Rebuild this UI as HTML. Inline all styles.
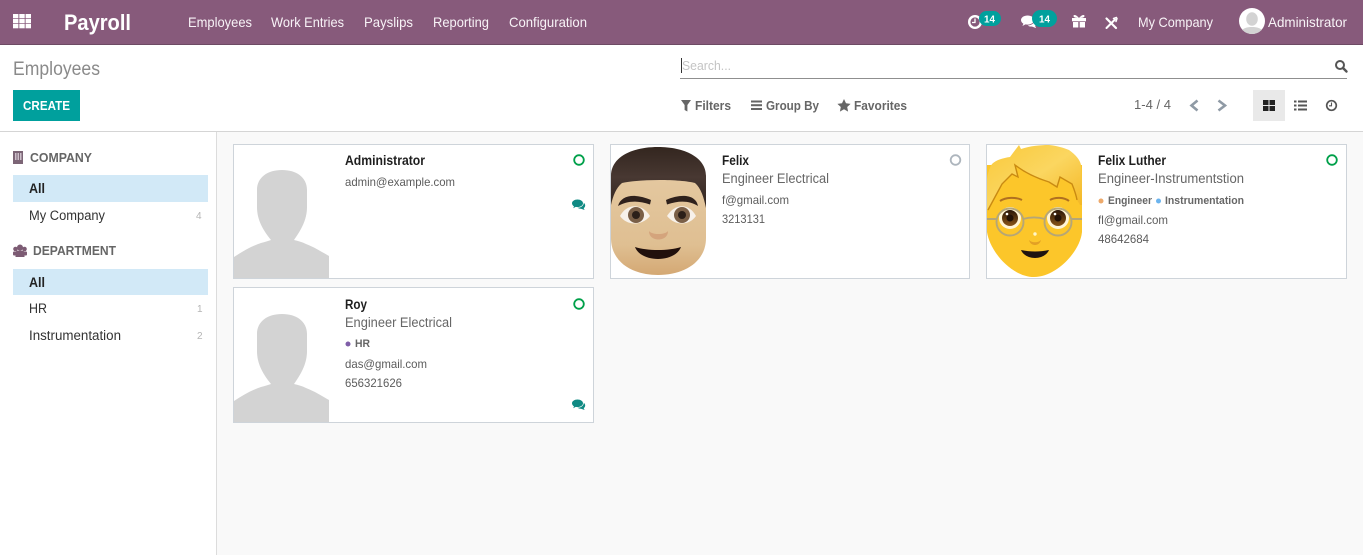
<!DOCTYPE html>
<html lang="en"><head><meta charset="utf-8"><title>Employees - Payroll</title>
<style>
html,body{margin:0;padding:0;width:1363px;height:555px;overflow:hidden;background:#f9f9f9}
svg{display:block}
text{font-family:"Liberation Sans",sans-serif;white-space:pre}
.nav{font-size:13.6px;fill:#f8f3f7}
.b{font-weight:bold}
.h{font-size:12.5px;font-weight:bold;fill:#666}
.side{font-size:13.5px;fill:#333}
.n{font-size:10px;fill:#b5b5b5}
.name{font-size:13.4px;font-weight:bold;fill:#1f1f1f}
.job{font-size:13.5px;fill:#666}
.sm{font-size:12px;fill:#5c5c5c}
.tag{font-size:11.4px;font-weight:bold;fill:#666}
.tb{font-size:13px;font-weight:bold;fill:#666}
</style></head><body>
<svg width="1363" height="555" viewBox="0 0 1363 555" xmlns="http://www.w3.org/2000/svg">
<defs>
<path id="sil" fill="#d3d3d3" d="M0 113C9 107 18 102 27 99C31 98 34 97 37 96C29 86 23 76 23 63L23 46C23 33 34 26 48 26C62 26 73 33 73 46L73 63C73 76 67 86 60 96C64 97 68 98 72 100C80 103 88 108 95 112V134H0Z"/>
<g id="chat"><path d="M5.500 0C2.500 0 0 1.600 0 3.800C0 5.100 .8 6.200 2 6.900L1.200 8.800L3.700 7.400C4.300 7.500 4.900 7.600 5.500 7.600C8.500 7.600 11 5.900 11 3.800C11 1.600 8.500 0 5.500 0Z"/><path d="M11.800 3.200C11.900 5.800 9.200 8.100 5.700 8.300C6.500 9 7.700 9.300 9 9.200L12.600 10.500L11.700 8.600C12.600 8 13.200 7.100 13.200 6C13.200 4.900 12.700 3.900 11.800 3.200Z"/></g>
<clipPath id="a1"><circle cx="1252" cy="21" r="13"/></clipPath>
<linearGradient id="skin" x1="0" y1="0" x2="0" y2="1"><stop offset="0" stop-color="#e4c8a0"/><stop offset=".7" stop-color="#dfbf92"/><stop offset="1" stop-color="#d4a873"/></linearGradient>
<linearGradient id="hair" x1="0" y1="0" x2="0" y2="1"><stop offset="0" stop-color="#33261f"/><stop offset=".5" stop-color="#483832"/><stop offset="1" stop-color="#31251f"/></linearGradient>
<linearGradient id="blond" x1="0" y1="0" x2="1" y2="1"><stop offset="0" stop-color="#f9c93a"/><stop offset=".5" stop-color="#fbd660"/><stop offset="1" stop-color="#f3b520"/></linearGradient>
<linearGradient id="iris" x1="0" y1="0" x2="0" y2="1"><stop offset="0" stop-color="#2a1608"/><stop offset="1" stop-color="#8a5518"/></linearGradient>
</defs>

<!-- navbar -->
<rect width="1363" height="44" fill="#875a7b"/><rect y="44" width="1363" height="1" fill="#6d4a64"/>
<g fill="#fff"><rect x="13" y="14" width="5.400" height="4.300"/><rect x="19.300" y="14" width="5.400" height="4.300"/><rect x="25.600" y="14" width="5.400" height="4.300"/><rect x="13" y="19" width="5.400" height="4.300"/><rect x="19.300" y="19" width="5.400" height="4.300"/><rect x="25.600" y="19" width="5.400" height="4.300"/><rect x="13" y="24" width="5.400" height="4.300"/><rect x="19.300" y="24" width="5.400" height="4.300"/><rect x="25.600" y="24" width="5.400" height="4.300"/></g>
<text x="64" y="30" font-size="22.500" font-weight="bold" fill="#fff" textLength="67" lengthAdjust="spacingAndGlyphs">Payroll</text>
<text class="nav" x="188" y="27" textLength="64" lengthAdjust="spacingAndGlyphs">Employees</text>
<text class="nav" x="271" y="27" textLength="73" lengthAdjust="spacingAndGlyphs">Work Entries</text>
<text class="nav" x="364" y="27" textLength="49" lengthAdjust="spacingAndGlyphs">Payslips</text>
<text class="nav" x="433" y="27" textLength="56" lengthAdjust="spacingAndGlyphs">Reporting</text>
<text class="nav" x="509" y="27" textLength="78" lengthAdjust="spacingAndGlyphs">Configuration</text>
<!-- activity -->
<circle cx="975" cy="22" r="5.800" fill="none" stroke="#fff" stroke-width="2.400"/><path d="M975 18.500V22.500H972" fill="none" stroke="#fff" stroke-width="1.300"/>
<rect x="979" y="11" width="22" height="15" rx="7.500" fill="#00a09d"/><text x="984" y="22.500" font-size="10.500" font-weight="bold" fill="#fff" textLength="11" lengthAdjust="spacingAndGlyphs">14</text>
<!-- messages -->
<g transform="translate(1021,15.500) scale(1.200)" fill="#fff"><use href="#chat"/></g>
<rect x="1032" y="10" width="25" height="17" rx="8.500" fill="#00a09d"/><text x="1039" y="22.500" font-size="10.500" font-weight="bold" fill="#fff" textLength="11" lengthAdjust="spacingAndGlyphs">14</text>
<!-- gift -->
<g fill="#fff"><rect x="1072" y="18" width="14" height="3.300"/><rect x="1073" y="22" width="5.300" height="5.500"/><rect x="1079.700" y="22" width="5.300" height="5.500"/><path d="M1079 18C1076 18 1073.500 17.500 1073.500 16C1073.500 14.500 1076 14.500 1079 18C1082 14.500 1084.500 14.500 1084.500 16C1084.500 17.500 1082 18 1079 18Z"/></g>
<!-- tools -->
<g stroke="#fff" fill="none" stroke-linecap="round"><path d="M1106.500 28L1115 19.500" stroke-width="2"/><path d="M1113.500 18.500L1116.500 17.500M1116 21.500L1117 18.500" stroke-width="1.500"/><path d="M1106.500 18.500L1116 28" stroke-width="2.200"/></g>
<text class="nav" x="1138" y="27" textLength="75" lengthAdjust="spacingAndGlyphs">My Company</text>
<circle cx="1252" cy="21" r="13" fill="#fff"/><g clip-path="url(#a1)"><ellipse cx="1252" cy="19" rx="5.800" ry="6.800" fill="#d3d3d3"/><path d="M1239 35C1241 28 1247 27 1252 27C1257 27 1263 28 1265 35Z" fill="#d3d3d3"/></g>
<text class="nav" x="1268" y="27" textLength="79" lengthAdjust="spacingAndGlyphs">Administrator</text>

<!-- control panel -->
<rect y="45" width="1363" height="86" fill="#fff"/><rect y="131" width="1363" height="1" fill="#d5d5d5"/>
<text x="13" y="75" font-size="19" fill="#8a8a8a" textLength="87" lengthAdjust="spacingAndGlyphs">Employees</text>
<rect x="13" y="90" width="67" height="31" fill="#00a09d"/>
<text x="23" y="110" font-size="12.500" font-weight="bold" fill="#fff" textLength="47" lengthAdjust="spacingAndGlyphs">CREATE</text>
<rect x="681" y="58" width="1" height="15" fill="#333"/>
<text x="682" y="70" font-size="13" fill="#c4c4c4" textLength="49" lengthAdjust="spacingAndGlyphs">Search...</text>
<rect x="680" y="78" width="667" height="1" fill="#8f8f8f"/>
<circle cx="1340" cy="65" r="4" fill="none" stroke="#555" stroke-width="2"/><path d="M1343 68L1346.500 71.500" stroke="#555" stroke-width="2.400" stroke-linecap="round"/>
<path d="M681 100H691L687.400 105V111.500L684.600 110V105Z" fill="#666"/>
<text class="tb" x="695" y="110" textLength="36" lengthAdjust="spacingAndGlyphs">Filters</text>
<g fill="#666"><rect x="751" y="100.500" width="11" height="2"/><rect x="751" y="104.200" width="11" height="2"/><rect x="751" y="108" width="11" height="2"/></g>
<text class="tb" x="766" y="110" textLength="53" lengthAdjust="spacingAndGlyphs">Group By</text>
<path d="M844 99L846 103.300L850.600 103.900L847.200 107L848.100 111.600L844 109.300L839.900 111.600L840.800 107L837.400 103.900L842 103.300Z" fill="#666"/>
<text class="tb" x="854" y="110" textLength="53" lengthAdjust="spacingAndGlyphs">Favorites</text>
<text x="1134" y="109" font-size="13" fill="#666" textLength="37" lengthAdjust="spacingAndGlyphs">1-4 / 4</text>
<path d="M1197.500 100.500L1191.500 105.500L1197.500 110.500" fill="none" stroke="#8f9aa5" stroke-width="2.600"/><path d="M1218.500 100.500L1225 105.500L1218.500 110.500" fill="none" stroke="#8f9aa5" stroke-width="2.600"/>
<rect x="1253" y="90" width="32" height="31" fill="#e9e9e9"/>
<g fill="#222"><rect x="1263" y="100" width="5.500" height="5"/><rect x="1269.500" y="100" width="5.500" height="5"/><rect x="1263" y="106" width="5.500" height="5"/><rect x="1269.500" y="106" width="5.500" height="5"/></g>
<g fill="#555"><rect x="1294" y="100.500" width="2.500" height="2"/><rect x="1298" y="100.500" width="9" height="2"/><rect x="1294" y="104.500" width="2.500" height="2"/><rect x="1298" y="104.500" width="9" height="2"/><rect x="1294" y="108.500" width="2.500" height="2"/><rect x="1298" y="108.500" width="9" height="2"/></g>
<circle cx="1331.500" cy="105.500" r="4.800" fill="none" stroke="#555" stroke-width="1.700"/><path d="M1331.500 102.500V105.800H1329" fill="none" stroke="#555" stroke-width="1.100"/>

<!-- sidebar -->
<rect y="132" width="216" height="423" fill="#fff"/><rect x="216" y="132" width="1" height="423" fill="#dcdcdc"/>
<rect x="13" y="151" width="10" height="13" fill="#7c6576"/><g fill="#cdbfca"><rect x="15" y="153" width="1.500" height="7"/><rect x="17.500" y="153" width="1.500" height="7"/><rect x="20" y="153" width="1.500" height="7"/></g>
<text class="h" x="30" y="162" textLength="62" lengthAdjust="spacingAndGlyphs">COMPANY</text>
<rect x="13" y="175" width="195" height="27" fill="#d2e9f7"/>
<text class="side b" x="29" y="193" style="fill:#222" textLength="16" lengthAdjust="spacingAndGlyphs">All</text>
<text class="side" x="29" y="220" textLength="76" lengthAdjust="spacingAndGlyphs">My Company</text>
<text class="n" x="196" y="219" textLength="6">4</text>
<g fill="#7c5b73"><circle cx="20" cy="247.500" r="3"/><circle cx="15.500" cy="249" r="2.300"/><circle cx="24.500" cy="249" r="2.300"/><path d="M15.500 257V252.500C15.500 251 17 250.500 20 250.500C23 250.500 24.500 251 24.500 252.500V257Z"/><rect x="13" y="251.500" width="3" height="4" rx="1"/><rect x="24" y="251.500" width="3" height="4" rx="1"/></g>
<text class="h" x="33" y="255" textLength="83" lengthAdjust="spacingAndGlyphs">DEPARTMENT</text>
<rect x="13" y="269" width="195" height="26" fill="#d2e9f7"/>
<text class="side b" x="29" y="287" style="fill:#222" textLength="16" lengthAdjust="spacingAndGlyphs">All</text>
<text class="side" x="29" y="313" textLength="18" lengthAdjust="spacingAndGlyphs">HR</text>
<text class="n" x="197" y="312" textLength="4">1</text>
<text class="side" x="29" y="340" textLength="92" lengthAdjust="spacingAndGlyphs">Instrumentation</text>
<text class="n" x="197" y="339" textLength="5">2</text>

<!-- card 1 -->
<rect x="233.500" y="144.500" width="360" height="134" fill="#fff" stroke="#ced4da"/>
<use href="#sil" x="234" y="144"/>
<text class="name" x="345" y="165" textLength="80" lengthAdjust="spacingAndGlyphs">Administrator</text>
<text class="sm" x="345" y="186" textLength="110" lengthAdjust="spacingAndGlyphs">admin@example.com</text>
<circle cx="579" cy="160" r="4.800" fill="none" stroke="#00a04a" stroke-width="1.800"/>
<g transform="translate(572,199.500)" fill="#0f8a83"><use href="#chat"/></g>

<!-- card 2 -->
<rect x="610.500" y="144.500" width="359" height="134" fill="#fff" stroke="#ced4da"/>
<path fill="url(#skin)" d="M611 175H706V238C706 262 684 275 658 275C632 275 611 262 611 238Z"/>
<path fill="url(#hair)" d="M611 205V176C611 157 632 147 658 147C684 147 706 157 706 176V208C704 198 701 188 695 183C680 179 640 179 622 183C616 188 613 196 611 205Z"/>
<path d="M618 206C621 195 635 193 651 200L650 204.500C637 200 627 201 618 206ZM666 200C682 193 696 195 698 206C690 201 680 200 667 204.500Z" fill="#2f211c"/>
<path d="M620 216C627 203 642 203 650 216C642 226 627 226 620 216Z" fill="#f7f1ea"/><path d="M667 216C675 203 689 203 696 216C689 226 675 226 667 216Z" fill="#f7f1ea"/>
<circle cx="636" cy="215" r="8" fill="#7a5f47"/><circle cx="636" cy="215" r="4" fill="#2b1f19"/><circle cx="682" cy="215" r="8" fill="#7a5f47"/><circle cx="682" cy="215" r="4" fill="#2b1f19"/>
<path d="M649 231C652 235 665 235 668 231C668 237 663 239.500 658.500 239.500C654 239.500 649 237 649 231Z" fill="#d4a47c"/>
<path d="M635 247C648 251 668 251 681 247C678 255 668 259 658 259C648 259 638 255 635 247Z" fill="#21100c"/>
<text class="name" x="722" y="165" textLength="27" lengthAdjust="spacingAndGlyphs">Felix</text>
<text class="job" x="722" y="183" textLength="107" lengthAdjust="spacingAndGlyphs">Engineer Electrical</text>
<text class="sm" x="722" y="204" textLength="67" lengthAdjust="spacingAndGlyphs">f@gmail.com</text>
<text class="sm" x="722" y="223" textLength="43" lengthAdjust="spacingAndGlyphs">3213131</text>
<circle cx="955.500" cy="160" r="4.800" fill="none" stroke="#adb5bd" stroke-width="1.800"/>

<!-- card 3 -->
<rect x="986.500" y="144.500" width="360" height="134" fill="#fff" stroke="#ced4da"/>
<path fill="#fcc62a" d="M987 165H1082V232C1080 252 1056 277 1034 277C1012 277 990 252 987 232Z"/>
<path fill="url(#blond)" d="M987 210V179C988 172 990 167 992 164C996 160 1003 158 1010 157C1013 153 1016 149 1019 145L1021 149C1030 146 1040 145 1049 145C1058 146 1064 148 1069 150C1076 155 1080 160 1081 165L1082 182V205L1080 205C1079 203 1078 202 1077 200C1076 194 1074 189 1072 184L1060 177L1057 187L1049 182C1036 178 1024 172 1015 165L1018 177L1012 174L1002 184L995 197Z"/>
<path d="M1077 200C1076 194 1074 189 1072 184L1060 177L1057 187L1049 182C1036 178 1024 172 1015 165L1018 177L1012 174L1002 184L995 197L988 210" fill="none" stroke="#c98a12" stroke-width="1.400"/>
<path d="M1000 201C1006 197 1016 197 1022 200M1050 200C1055 197 1064 197 1069 201" fill="none" stroke="#b07020" stroke-width="2"/>
<ellipse cx="1010" cy="218" rx="11" ry="11" fill="#fff4d6"/><ellipse cx="1058" cy="218" rx="11" ry="11" fill="#fff4d6"/>
<circle cx="1010" cy="218" r="8" fill="url(#iris)"/><circle cx="1058" cy="218" r="8" fill="url(#iris)"/><circle cx="1010" cy="218" r="3.500" fill="#231207"/><circle cx="1058" cy="218" r="3.500" fill="#231207"/><circle cx="1007" cy="214" r="1.300" fill="#fff"/><circle cx="1055" cy="214" r="1.300" fill="#fff"/>
<g fill="none" stroke="#b5a677" stroke-width="1.900"><circle cx="1010" cy="222" r="13.500"/><circle cx="1058" cy="222" r="13.500"/><path d="M1023 219C1030 217 1038 217 1045 219M987 219L997 219M1071 219L1082 219"/></g>
<circle cx="1035" cy="234" r="1.700" fill="#fff6c8"/><path d="M1029 240C1032 243 1038 243 1041 240C1040 244 1037 245 1035 245C1033 245 1030 244 1029 240Z" fill="#e2a025"/>
<path d="M1021 250C1030 252 1040 252 1049 250C1047 255 1041 258 1035 258C1029 258 1023 255 1021 250Z" fill="#1f1410"/>
<text class="name" x="1098" y="165" textLength="68" lengthAdjust="spacingAndGlyphs">Felix Luther</text>
<text class="job" x="1098" y="183" textLength="146" lengthAdjust="spacingAndGlyphs">Engineer-Instrumentstion</text>
<circle cx="1101" cy="201" r="2.500" fill="#eda96b"/><text class="tag" x="1108" y="204" textLength="44" lengthAdjust="spacingAndGlyphs">Engineer</text>
<circle cx="1158.500" cy="201" r="2.500" fill="#6cb4ee"/><text class="tag" x="1165" y="204" textLength="79" lengthAdjust="spacingAndGlyphs">Instrumentation</text>
<text class="sm" x="1098" y="224" textLength="70" lengthAdjust="spacingAndGlyphs">fl@gmail.com</text>
<text class="sm" x="1098" y="243" textLength="51" lengthAdjust="spacingAndGlyphs">48642684</text>
<circle cx="1332" cy="160" r="4.800" fill="none" stroke="#00a04a" stroke-width="1.800"/>

<!-- card 4 -->
<rect x="233.500" y="287.500" width="360" height="135" fill="#fff" stroke="#ced4da"/>
<use href="#sil" x="234" y="288"/>
<text class="name" x="345" y="309" textLength="22" lengthAdjust="spacingAndGlyphs">Roy</text>
<text class="job" x="345" y="327" textLength="107" lengthAdjust="spacingAndGlyphs">Engineer Electrical</text>
<circle cx="348" cy="344" r="2.500" fill="#7f5ea8"/><text class="tag" x="355" y="347" textLength="15" lengthAdjust="spacingAndGlyphs">HR</text>
<text class="sm" x="345" y="368" textLength="82" lengthAdjust="spacingAndGlyphs">das@gmail.com</text>
<text class="sm" x="345" y="387" textLength="57" lengthAdjust="spacingAndGlyphs">656321626</text>
<circle cx="579" cy="304" r="4.800" fill="none" stroke="#00a04a" stroke-width="1.800"/>
<g transform="translate(572,399.500)" fill="#0f8a83"><use href="#chat"/></g>
</svg>
</body></html>
